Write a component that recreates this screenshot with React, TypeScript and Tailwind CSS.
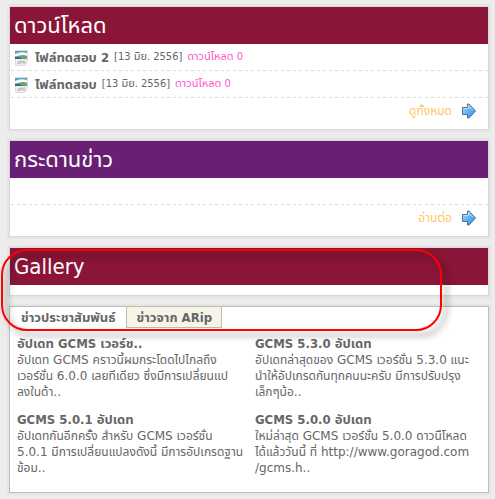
import type { ReactNode } from 'react'

const downloads = [
    { name: 'ไฟล์ทดสอบ 2', date: '13 มิย. 2556', count: 0 },
    { name: 'ไฟล์ทดสอบ', date: '13 มิย. 2556', count: 0 },
]

const news = [
    {
        title: 'อัปเดท GCMS เวอร์ช..',
        lines: ['อัปเดท GCMS คราวนี้ผมกระโดดไปไกลถึง', 'เวอร์ชั่น 6.0.0 เลยทีเดียว ซึ่งมีการเปลี่ยนแป', 'ลงในด้า..'],
    },
    {
        title: 'GCMS 5.3.0 อัปเดท',
        lines: ['อัปเดทล่าสุดของ GCMS เวอร์ชั่น 5.3.0 แนะ', 'นำให้อัปเกรดกันทุกคนนะครับ มีการปรับปรุง', 'เล็กๆน้อ..'],
    },
    {
        title: 'GCMS 5.0.1 อัปเดท',
        lines: ['อัปเดทกันอีกครั้ง สำหรับ GCMS เวอร์ชั่น', '5.0.1 มีการเปลี่ยนแปลงดังนี้ มีการอัปเกรดฐาน', 'ข้อม..'],
    },
    {
        title: 'GCMS 5.0.0 อัปเดท',
        lines: ['ใหม่ล่าสุด GCMS เวอร์ชั่น 5.0.0 ดาวนืโหลด', 'ได้แล้ววันนี้ ที่ http://www.goragod.com', '/gcms.h..'],
    },
]

function JpgIcon() {
    return (
        <svg className="h-4 w-4 shrink-0" viewBox="0 0 16 16" aria-hidden="true">
            <path d="M1.5.5h12v11l-3 4h-9z" fill="#efefef" stroke="#dcdcdc" />
            <path d="M1 1h12v8H1z" fill="#5b9fc9" />
            <path d="M1 4q5-3 12-1v3q-6-2-12 1z" fill="#f4fafc" />
            <path d="M1 8q6-4 12-2v3H1z" fill="#6ba368" />
            <path d="M1 6.500q4 0 8 2.500H1z" fill="#2f6b80" />
            <path d="M3 13.500h1.500v-2.500m1.500 3v-3h1.500v1.500H6m5-1.500H9v2h2v-1" fill="none" stroke="#aaaaaa" strokeWidth=".8" />
        </svg>
    )
}

function ArrowIcon() {
    return (
        <svg className="h-4 w-4 shrink-0" viewBox="0 0 16 16" aria-hidden="true">
            <defs>
                <linearGradient id="arrow" x1="0" y1="0" x2="1" y2="1">
                    <stop offset="0" stopColor="#b5e0ff" />
                    <stop offset=".5" stopColor="#62b1f5" />
                    <stop offset="1" stopColor="#2f86e0" />
                </linearGradient>
            </defs>
            <path d="M1.500 4.500h5v-3.500h1.500l6.500 7-6.500 7H6.500v-3.500h-5z" fill="url(#arrow)" stroke="#4f7096" strokeLinejoin="round" />
            <path d="M2.500 5.500h5v-3l4.500 5" fill="none" stroke="#d3ecff" strokeOpacity=".7" />
        </svg>
    )
}

function Panel({ title, color, children }: { title: string; color: string; children: ReactNode }) {
    return (
        <section className="border border-[#d8d8d8] bg-white shadow-[0_0_0_2px_#e5e5e5]">
            <h2 className={`flex h-[37px] items-center px-1 text-[22px] leading-8 text-white ${color}`}>{title}</h2>
            {children}
        </section>
    )
}

function MoreLink({ label }: { label: string }) {
    return (
        <div className="flex h-[31px] justify-end pt-[5px] pr-[11px]">
            <a href="#more" className="flex h-4 items-center gap-[9px] text-xs text-[#ffc45e]">
                {label}
                <ArrowIcon />
            </a>
        </div>
    )
}

function Divider() {
    return <div className="ml-px h-px bg-[repeating-linear-gradient(90deg,#d9d9d9_0_3px,transparent_3px_6px)]" />
}

export default function App() {
    return (
        <main className="flex min-h-screen flex-col gap-[10px] bg-[#ececec] pt-[6px] pr-[6px] pb-[6px] pl-[9px] font-[Tahoma,'DejaVu_Sans_Condensed','Noto_Sans_Thai',sans-serif] text-xs text-[#666666]">
            <Panel title="ดาวน์โหลด" color="bg-[#8a1538]">
                <ul>
                    {downloads.map((file) => (
                        <li key={file.name}>
                            <div className="flex h-[26px] items-center gap-[5px] px-1 pt-px text-[11px] whitespace-nowrap">
                                <JpgIcon />
                                <a href="#file" className="text-[13px] font-bold">{file.name}</a>
                                <span>[{file.date}]</span>
                                <span className="text-[#ff55cc]">ดาวน์โหลด {file.count}</span>
                            </div>
                            <Divider />
                        </li>
                    ))}
                </ul>
                <MoreLink label="ดูทั้งหมด" />
            </Panel>

            <Panel title="กระดานข่าว" color="bg-[#691f74]">
                <div className="h-[26px]" />
                <Divider />
                <MoreLink label="อ่านต่อ" />
            </Panel>

            <div className="relative flex flex-col gap-[10px]">
                <Panel title="Gallery" color="bg-[#8a1538]">
                    <div className="h-[10px]" />
                </Panel>

                <section className="border border-[#bdbdb0] bg-white pb-4 shadow-[0_0_0_2px_#e5e5e5]">
                    <div role="tablist" className="flex h-[21px] text-[13px] font-bold">
                        <button role="tab" aria-selected="true" className="px-[11px] whitespace-nowrap">ข่าวประชาสัมพันธ์</button>
                        <button role="tab" aria-selected="false" className="border-r border-b border-l border-[#bdbdb0] bg-[#f6f4e6] px-[9px] pt-px whitespace-nowrap">ข่าวจาก ARip</button>
                    </div>
                    <div className="grid grid-cols-2 gap-x-3 gap-y-3 px-[7px] pt-2 leading-4 whitespace-nowrap">
                        {news.map((item) => (
                            <article key={item.title}>
                                <h3 className="text-[13px] leading-4 font-bold">
                                    <a href="#news">{item.title}</a>
                                </h3>
                                <p className="font-['DejaVu_Sans','Noto_Sans_Thai',sans-serif]">
                                    {item.lines.map((line) => (
                                        <span key={line} className="block">{line}</span>
                                    ))}
                                </p>
                            </article>
                        ))}
                    </div>
                </section>

                {/* Red callout over the gallery title and the tabs */}
                <div className="pointer-events-none absolute top-[2px] right-[47px] -left-2 h-[82px] rounded-[26px] border-2 border-[#ff0000] drop-shadow-[5px_5px_3px_rgba(0,0,0,0.45)]" />
            </div>
        </main>
    )
}
